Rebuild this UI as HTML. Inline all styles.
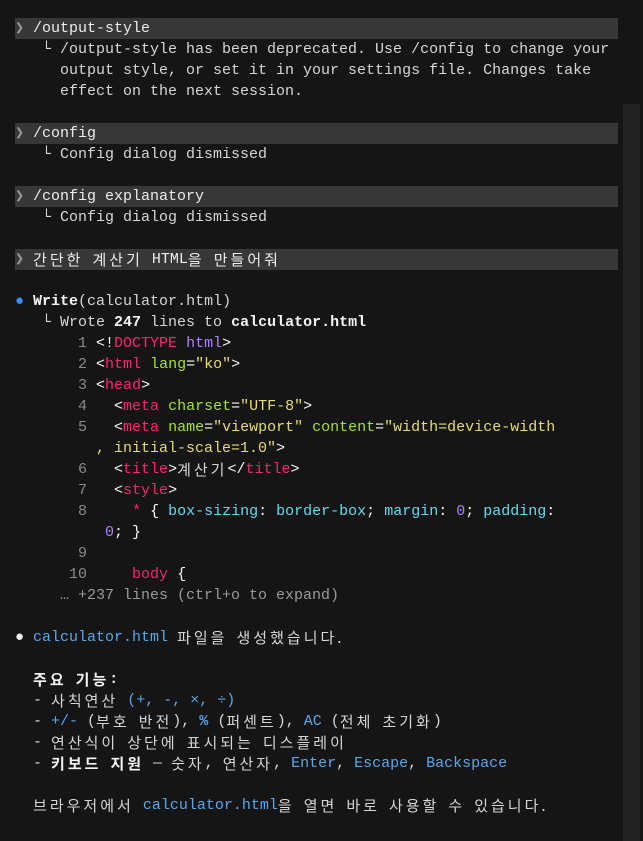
<!DOCTYPE html>
<html><head><meta charset="utf-8"><style>
html,body{margin:0;padding:0;background:#151515;width:643px;height:841px;overflow:hidden}
#t{position:absolute;left:15px;top:18px;font-family:"Liberation Mono","Noto Sans CJK KR",monospace;font-size:15px;color:#d6d6d6}
.l{height:21px;line-height:21px;white-space:pre;width:603px;overflow:hidden}
.bar{background:#373737;color:#ececec}
.c{color:#9a9a9a}
i{font-style:normal;font-family:"Noto Sans CJK KR",sans-serif;letter-spacing:3px;font-weight:400;line-height:21px;vertical-align:top}
b{color:#f4f4f4}
.n{color:#8a8a8a}.tg{color:#f92672}.at{color:#a6e22e}.st{color:#e6db74}.kw{color:#ae81ff}.p{color:#f8f8f2}.cs{color:#66d9ef}
.bl{color:#5aa7ec}.dot{color:#3b8eea}
#sb{position:absolute;left:623px;top:104px;width:17px;height:737px;background:#222}
</style></head><body>
<div id="sb"></div>
<div id="t">
<div class="l bar"><span class="c">❯</span> /output-style</div>
<div class="l">   └ /output-style has been deprecated. Use /config to change your</div>
<div class="l">     output style, or set it in your settings file. Changes take</div>
<div class="l">     effect on the next session.</div>
<div class="l"> </div>
<div class="l bar"><span class="c">❯</span> /config</div>
<div class="l">   └ Config dialog dismissed</div>
<div class="l"> </div>
<div class="l bar"><span class="c">❯</span> /config explanatory</div>
<div class="l">   └ Config dialog dismissed</div>
<div class="l"> </div>
<div class="l bar"><span class="c">❯</span> <i>간단한</i> <i>계산기</i> HTML<i>을</i> <i>만들어줘</i></div>
<div class="l"> </div>
<div class="l"><span class="dot">●</span> <b>Write</b>(calculator.html)</div>
<div class="l">   └ Wrote <b>247</b> lines to <b>calculator.html</b></div>
<div class="l"><span class="n">       1</span> <span class="p">&lt;!</span><span class="tg">DOCTYPE</span> <span class="kw">html</span><span class="p">&gt;</span></div>
<div class="l"><span class="n">       2</span> <span class="p">&lt;</span><span class="tg">html</span> <span class="at">lang</span><span class="p">=</span><span class="st">"ko"</span><span class="p">&gt;</span></div>
<div class="l"><span class="n">       3</span> <span class="p">&lt;</span><span class="tg">head</span><span class="p">&gt;</span></div>
<div class="l"><span class="n">       4</span>   <span class="p">&lt;</span><span class="tg">meta</span> <span class="at">charset</span><span class="p">=</span><span class="st">"UTF-8"</span><span class="p">&gt;</span></div>
<div class="l"><span class="n">       5</span>   <span class="p">&lt;</span><span class="tg">meta</span> <span class="at">name</span><span class="p">=</span><span class="st">"viewport"</span> <span class="at">content</span><span class="p">=</span><span class="st">"width=device-width</span></div>
<div class="l">         <span class="st">, initial-scale=1.0"</span><span class="p">&gt;</span></div>
<div class="l"><span class="n">       6</span>   <span class="p">&lt;</span><span class="tg">title</span><span class="p">&gt;</span><i>계산기</i><span class="p">&lt;/</span><span class="tg">title</span><span class="p">&gt;</span></div>
<div class="l"><span class="n">       7</span>   <span class="p">&lt;</span><span class="tg">style</span><span class="p">&gt;</span></div>
<div class="l"><span class="n">       8</span>     <span class="tg">*</span> <span class="p">{</span> <span class="cs">box-sizing</span><span class="p">:</span> <span class="cs">border-box</span><span class="p">;</span> <span class="cs">margin</span><span class="p">:</span> <span class="kw">0</span><span class="p">;</span> <span class="cs">padding</span><span class="p">:</span></div>
<div class="l">          <span class="kw">0</span><span class="p">; }</span></div>
<div class="l"><span class="n">       9</span></div>
<div class="l"><span class="n">      10</span>     <span class="tg">body</span> <span class="p">{</span></div>
<div class="l c">     … +237 lines (ctrl+o to expand)</div>
<div class="l"> </div>
<div class="l"><span style="color:#f0f0f0">●</span> <span class="bl">calculator.html</span> <i>파일을</i> <i>생성했습니다.</i></div>
<div class="l"> </div>
<div class="l">  <b><i style="font-weight:700">주요</i> <i style="font-weight:700">기능</i>:</b></div>
<div class="l">  - <i>사칙연산</i> <span class="bl">(+, -, ×, ÷)</span></div>
<div class="l">  - <span class="bl">+/-</span> (<i>부호</i> <i>반전</i>), <b class="bl">%</b> (<i>퍼센트</i>), <span class="bl">AC</span> (<i>전체</i> <i>초기화</i>)</div>
<div class="l">  - <i>연산식이</i> <i>상단에</i> <i>표시되는</i> <i>디스플레이</i></div>
<div class="l">  - <b><i style="font-weight:700">키보드</i> <i style="font-weight:700">지원</i></b> — <i>숫자</i>, <i>연산자</i>, <span class="bl">Enter</span>, <span class="bl">Escape</span>, <span class="bl">Backspace</span></div>
<div class="l"> </div>
<div class="l">  <i>브라우저에서</i> <span class="bl">calculator.html</span><i>을</i> <i>열면</i> <i>바로</i> <i>사용할</i> <i>수</i> <i>있습니다.</i></div>
</div>
</body></html>
